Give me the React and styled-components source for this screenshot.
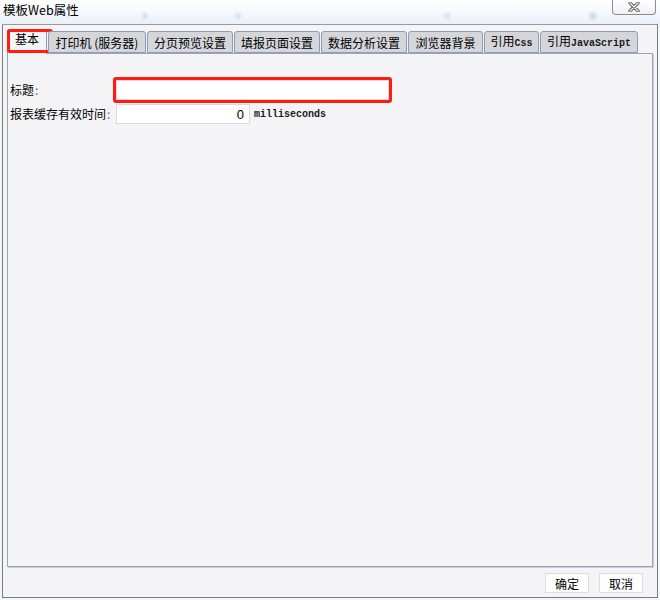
import React from "react";
import styled, { createGlobalStyle } from "styled-components";

const Global = createGlobalStyle`
  html, body { margin: 0; padding: 0; background: #f4f4f6; }
  body { font-family: "Noto Sans CJK SC", "Noto Sans", sans-serif; color: #000; }
  * { box-sizing: border-box; }
`;

const Window = styled.div`
  width: 660px;
  height: 600px;
  display: flex;
  flex-direction: column;
  background: #f4f5f7;
  overflow: hidden;
`;

const TitleBar = styled.div`
  height: 24px;
  flex: none;
  display: flex;
  align-items: flex-start;
  padding-left: 3px;
  background:
    radial-gradient(circle at 145px 16px, rgba(160, 190, 230, 0.45) 0, rgba(160, 190, 230, 0) 5px),
    radial-gradient(circle at 238px 16px, rgba(160, 190, 230, 0.4) 0, rgba(160, 190, 230, 0) 5px),
    radial-gradient(circle at 447px 16px, rgba(160, 190, 230, 0.4) 0, rgba(160, 190, 230, 0) 5px),
    radial-gradient(circle at 593px 16px, rgba(150, 180, 225, 0.5) 0, rgba(150, 180, 225, 0) 6px),
    linear-gradient(to bottom, #ffffff 0%, #f6f9fd 50%, #e9f0f9 100%);
`;

const Title = styled.span`
  font-size: 12.5px;
  line-height: 20px;
  color: #000;
`;

const CloseButton = styled.div`
  margin-left: auto;
  margin-right: 4px;
  width: 44px;
  height: 15px;
  border: 1px solid #8c8c8c;
  border-top: none;
  border-radius: 0 0 4px 4px;
  background: linear-gradient(#ffffff, #eef1f5);
  display: flex;
  align-items: center;
  justify-content: center;
`;

const CloseIcon = styled.svg`
  width: 12px;
  height: 10px;
  display: block;
`;

const Frame = styled.div`
  flex: 1;
  margin: 0 2px 2px 2px;
  border: 1px solid #7c7c7c;
  border-top-color: #9a9a9a;
  background: #f4f4f6;
  padding: 4px 4px 0 4px;
  display: flex;
  flex-direction: column;
`;

const TabStrip = styled.div`
  display: flex;
  align-items: flex-end;
  gap: 1px;
  height: 24px;
  position: relative;
  z-index: 1;
`;

const Tab = styled.div`
  position: relative;
  width: ${(p) => p.$w}px;
  height: ${(p) => (p.$active ? 25 : 22)}px;
  margin-bottom: ${(p) => (p.$active ? -1 : 0)}px;
  border: 1px solid #8e9bb3;
  border-bottom: ${(p) => (p.$active ? "none" : "1px solid #8e9bb3")};
  border-radius: 3px 3px 0 0;
  background: ${(p) => (p.$active ? "#f4f4f6" : "#d5d6da")};
  display: flex;
  align-items: ${(p) => (p.$active ? "flex-start" : "center")};
  justify-content: center;
  font-size: 12px;
  line-height: 17px;
  white-space: nowrap;
  &::after {
    content: "";
    display: ${(p) => (p.$highlight ? "block" : "none")};
    position: absolute;
    left: -1px;
    top: -1px;
    width: 40px;
    height: 18px;
    border: 3px solid #ff1d12;
    border-radius: 3px;
  }
`;

const TabText = styled.span`
  white-space: nowrap;
`;

const Mono = styled.span`
  font-family: "Liberation Mono", "DejaVu Sans Mono", monospace;
  font-size: 10px;
  font-weight: bold;
  color: #1a1a1a;
`;

const Panel = styled.div`
  width: 646px;
  height: 514px;
  border: 1px solid #9aa5bd;
  box-shadow: 1px 1px 0 #c6ccd8;
  background: #f4f4f6;
  padding: 26px 0 0 2px;
  display: flex;
  flex-direction: column;
  gap: 4px;
`;

const Row = styled.div`
  display: flex;
  align-items: center;
  height: 20px;
`;

const Label = styled.div`
  width: 106px;
  flex: none;
  font-size: 12px;
  line-height: 16px;
  white-space: nowrap;
`;

const Colon = styled.span`
  color: #6f5a8c;
  margin-left: 1px;
`;

const Highlight = styled.div`
  margin: -3px;
  border: 3px solid #ff1d12;
  border-radius: 3px;
  display: flex;
`;

const Field = styled.div`
  width: ${(p) => p.$w}px;
  height: 20px;
  background: #ffffff;
  border: 1px solid #dadada;
  display: flex;
  align-items: center;
  justify-content: flex-end;
  padding-right: 5px;
  font-family: "Liberation Sans", "Noto Sans", sans-serif;
  font-size: 13px;
`;

const Unit = styled(Mono)`
  margin-left: 4px;
`;

const Footer = styled.div`
  display: flex;
  justify-content: flex-end;
  gap: 10px;
  padding: 6px 10px 0 0;
`;

const Button = styled.div`
  width: 44px;
  height: 20px;
  border: 1px solid #dcdcdc;
  background: #fdfdfd;
  display: flex;
  align-items: center;
  justify-content: center;
  font-size: 12px;
`;

const tabs = [
  { label: "基本", w: 40, active: true, highlight: true },
  { label: "打印机 (服务器)", w: 98 },
  { label: "分页预览设置", w: 86 },
  { label: "填报页面设置", w: 86 },
  { label: "数据分析设置", w: 86 },
  { label: "浏览器背景", w: 75 },
  { label: <>引用<Mono>Css</Mono></>, w: 55 },
  { label: <>引用<Mono>JavaScript</Mono></>, w: 98 },
];

export default function App() {
  return (
    <>
      <Global />
      <Window>
        <TitleBar>
          <Title>模板Web属性</Title>
          <CloseButton>
            <CloseIcon viewBox="0 0 12 10">
              <path
                d="M2 1 L10 9 M10 1 L2 9"
                stroke="#5f5f5f"
                strokeWidth="3.2"
                strokeLinecap="round"
              />
              <path
                d="M2 1 L10 9 M10 1 L2 9"
                stroke="#f2f2f2"
                strokeWidth="1.2"
                strokeLinecap="round"
              />
            </CloseIcon>
          </CloseButton>
        </TitleBar>
        <Frame>
          <TabStrip>
            {tabs.map((t, i) => (
              <Tab key={i} $w={t.w} $active={t.active} $highlight={t.highlight}>
                <TabText>{t.label}</TabText>
              </Tab>
            ))}
          </TabStrip>
          <Panel>
            <Row>
              <Label>
                标题<Colon>:</Colon>
              </Label>
              <Highlight>
                <Field $w={273} />
              </Highlight>
            </Row>
            <Row>
              <Label>
                报表缓存有效时间<Colon>:</Colon>
              </Label>
              <Field $w={134}>0</Field>
              <Unit>milliseconds</Unit>
            </Row>
          </Panel>
          <Footer>
            <Button>确定</Button>
            <Button>取消</Button>
          </Footer>
        </Frame>
      </Window>
    </>
  );
}
